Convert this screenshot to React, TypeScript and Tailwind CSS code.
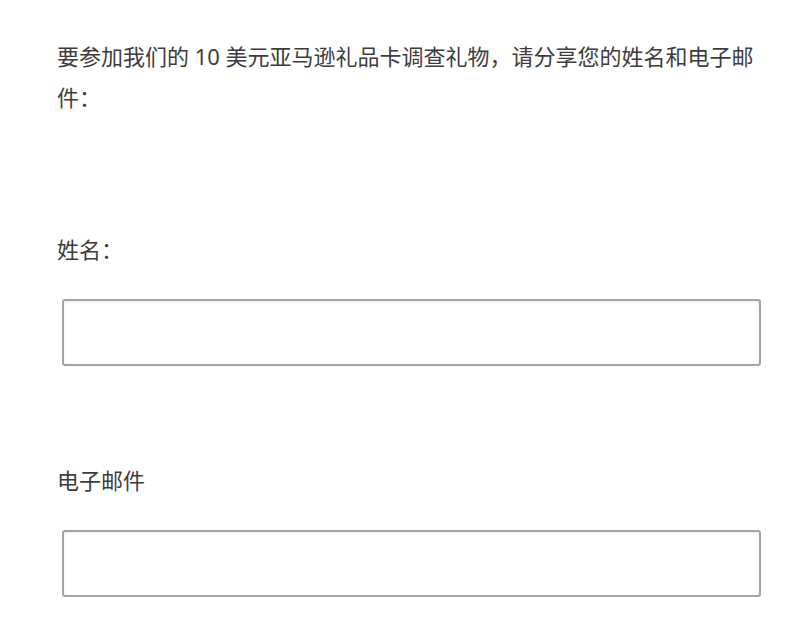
export default function App() {
  const font = { fontFamily: '"Noto Sans", "Noto Sans CJK SC", sans-serif' }
  return (
    <div className="min-h-[638px] w-[798px] bg-white" style={font}>
      <div className="w-[705px] ml-[57px] pt-[36px] text-[22px] leading-[41px] text-[#3d3d3d]">
        <p>要参加我们的 10 美元亚马逊礼品卡调查礼物，请分享您的姓名和电子邮件：</p>

        <label className="block mt-[111px]">姓名：</label>
        <input
          type="text"
          className="block mt-[29px] ml-[5px] w-[699px] h-[67px] rounded-[3px] border-2 border-[#a3a3a3] bg-white shadow-[inset_0_1px_3px_rgba(0,0,0,0.08)] outline-none"
        />

        <label className="block mt-[94px]">电子邮件</label>
        <input
          type="email"
          className="block mt-[29px] ml-[5px] w-[699px] h-[67px] rounded-[3px] border-2 border-[#a3a3a3] bg-white shadow-[inset_0_1px_3px_rgba(0,0,0,0.08)] outline-none"
        />
      </div>
    </div>
  )
}
